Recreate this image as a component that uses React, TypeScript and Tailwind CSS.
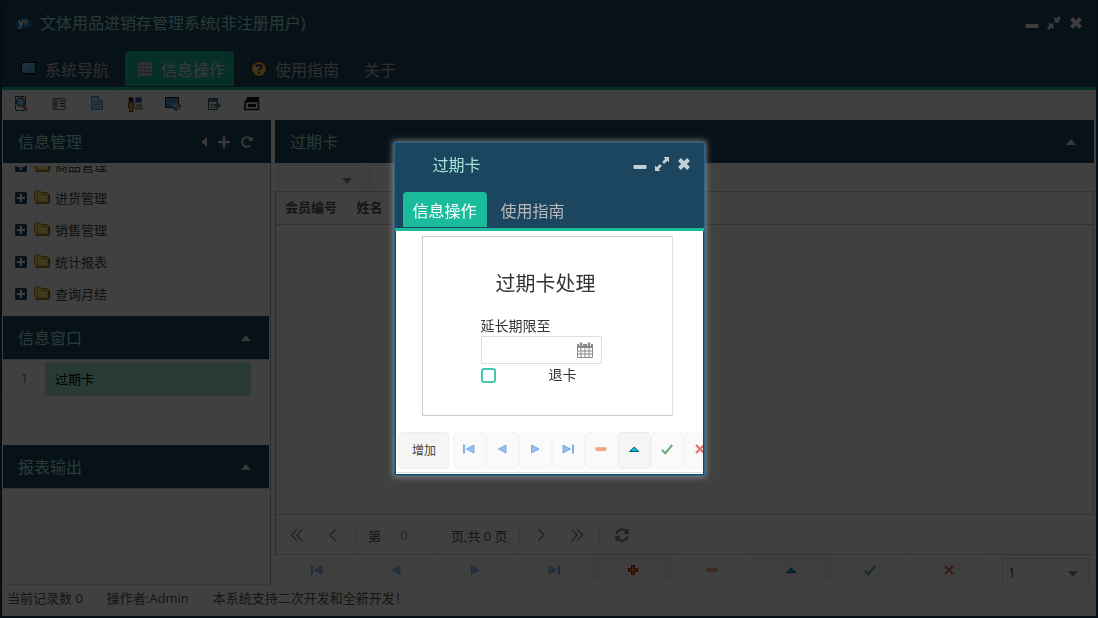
import React, { useState } from "react";
import { FaPlus, FaRedoAlt, FaSyncAlt } from "react-icons/fa";

type NavName =
  | "first"
  | "prev"
  | "next"
  | "last"
  | "add"
  | "remove"
  | "up"
  | "ok"
  | "cancel";

const navLabels: Record<NavName, string> = {
  first: "首记录",
  prev: "上一条",
  next: "下一条",
  last: "末记录",
  add: "增加",
  remove: "删除",
  up: "编辑",
  ok: "保存",
  cancel: "取消",
};

const gridNav: NavName[] = ["first", "prev", "next", "last", "add", "remove", "up", "ok", "cancel"];
const dialogNav: NavName[] = ["first", "prev", "next", "last", "remove", "up", "ok", "cancel"];
const treeItems = ["商品管理", "进货管理", "销售管理", "统计报表", "查询月结"];

const NavIcon = ({ name }: { name: NavName }) => (
  <svg viewBox="0 0 16 16" className="size-4 shrink-0">
    {name === "first" && (
      <>
        <path d="M3 3.5v9" stroke="#3f88dc" strokeWidth="1.6" />
        <path d="M13 4v8L5.5 8z" fill="#7db2f0" stroke="#3f88dc" strokeWidth="0.8" />
      </>
    )}
    {name === "prev" && (
      <path d="M12 4v8L4.5 8z" fill="#7db2f0" stroke="#3f88dc" strokeWidth="0.8" />
    )}
    {name === "next" && (
      <path d="M4.5 4v8L12 8z" fill="#7db2f0" stroke="#3f88dc" strokeWidth="0.8" />
    )}
    {name === "last" && (
      <>
        <path d="M13 3.5v9" stroke="#3f88dc" strokeWidth="1.6" />
        <path d="M3 4v8l7.5-4z" fill="#7db2f0" stroke="#3f88dc" strokeWidth="0.8" />
      </>
    )}
    {name === "add" && (
      <path
        d="M6.5 3.5h3v3h3v3h-3v3h-3v-3h-3v-3h3z"
        fill="#f0793a"
        stroke="#a51d00"
        strokeWidth="1"
      />
    )}
    {name === "remove" && (
      <path d="M3 6.8h10v2.600H3z" fill="#ff9868" stroke="#e8643a" strokeWidth="0.7" />
    )}
    {name === "up" && (
      <path d="M3.5 10.5h9.5L8.2 6z" fill="#12b5d8" stroke="#04637c" strokeWidth="1" />
    )}
    {name === "ok" && (
      <path d="M2.8 8.8l3.400 3.400L13.200 4" fill="none" stroke="#48955a" strokeWidth="2" />
    )}
    {name === "cancel" && (
      <path d="M4 4l8 8M12 4l-8 8" fill="none" stroke="#e0483f" strokeWidth="2" />
    )}
  </svg>
);

const NavButton = ({ name, className }: { name: NavName; className: string }) => {
  const enabled = name === "add" || name === "up";
  return (
    <button
      type="button"
      aria-label={navLabels[name]}
      className={`flex items-center justify-center rounded border ${
        enabled ? "border-[#ececec] bg-[#f5f5f5]" : "border-[#f5f5f5] bg-[#fafafa]"
      } ${className}`}
    >
      <span className={enabled ? "" : "opacity-80"}>
        <NavIcon name={name} />
      </span>
    </button>
  );
};

const WindowTools = ({ restore }: { restore?: boolean }) => (
  <div className="flex items-center gap-2">
    <button type="button" aria-label="最小化">
      <svg viewBox="0 0 14 14" className="size-3.5" fill="currentColor">
        <rect x="0.5" y="8" width="13" height="4" rx="1" />
      </svg>
    </button>
    <button type="button" aria-label={restore ? "还原" : "最大化"}>
      <svg viewBox="0 0 14 14" className="size-3.5" fill="currentColor">
        {restore ? (
          <path d="M7.500 0.800v5.700h5.700L11.400 4.700 14 2.100 11.900 0l-2.600 2.600zM6.500 13.200V7.500H0.800L2.600 9.300 0 11.900 2.100 14l2.600-2.600z" />
        ) : (
          <path d="M8.500 0H14v5.500l-1.700-1.700-3.200 3.200-2-2 3.200-3.200zM5.500 14H0V8.500l1.700 1.700 3.200-3.200 2 2-3.200 3.200z" />
        )}
      </svg>
    </button>
    <button type="button" aria-label="关闭">
      <svg viewBox="0 0 14 14" className="size-3.5">
        <path d="M2.500 2.500l9 9M11.500 2.500l-9 9" stroke="currentColor" strokeWidth="4" />
      </svg>
    </button>
  </div>
);

const ScreenIcon = () => (
  <svg viewBox="0 0 16 16" className="size-4">
    <rect x="0.5" y="1.5" width="14" height="11" fill="#5ba6da" stroke="#0a0a0a" />
    <path d="M1 2h13L1 12z" fill="#8fcbee" opacity="0.6" />
  </svg>
);

const GridIcon = () => (
  <svg viewBox="0 0 16 16" className="size-4">
    <rect x="1" y="1" width="14" height="14" rx="2" fill="#cccccc" />
    <path
      d="M1 4.500h14M1 8h14M1 11.500h14M4.500 1v14M8 1v14M11.500 1v14"
      stroke="#6f7f7a"
      strokeWidth="0.7"
    />
  </svg>
);

const HelpIcon = () => (
  <svg viewBox="0 0 16 16" className="size-4">
    <path
      d="M5 0.5h6L15.500 5v5.500L11 15.500H5L0.500 10.500V5z"
      fill="#f3a727"
      stroke="#2b1600"
      strokeWidth="1"
    />
    <circle cx="8" cy="8" r="5.500" fill="#ffd878" />
    <path
      d="M5.500 6.300c0-3.200 5.200-3 5 0 0 1.700-2.500 1.700-2.500 3.300M8 11v1.800"
      fill="none"
      stroke="#13335a"
      strokeWidth="2"
    />
  </svg>
);

const toolbarIcons = [
  {
    label: "查询",
    icon: (
      <>
        <path d="M2.500 0.500h10v14h-10z" fill="#f6f6f6" stroke="#333" strokeDasharray="4 1" />
        <circle cx="7.500" cy="6" r="4" fill="#7fd2f7" stroke="#23556f" strokeWidth="1.3" />
        <path d="M10 9.500l4 4.500" stroke="#d0602d" strokeWidth="3" />
      </>
    ),
  },
  {
    label: "列表",
    icon: (
      <>
        <path d="M2 2.500h12v11H2z" fill="#f8f8f8" stroke="#666" />
        <path d="M3 3.500h3v9H3z" fill="#5e91b4" />
        <path d="M7.500 5h1M7.500 7.500h1M7.500 10h1M9.500 5H13M9.500 7.500H13M9.500 10H13" stroke="#222" />
      </>
    ),
  },
  {
    label: "文档",
    icon: (
      <>
        <path d="M2.500 0.500h7l4 4v9h-11z" fill="#a8dcff" stroke="#4e88b5" />
        <path d="M9.500 0.500v4h4" fill="#fff" stroke="#4e88b5" />
        <path d="M4.500 6h7M4.500 8.500h7M4.500 11h7" stroke="#5793c0" />
      </>
    ),
  },
  {
    label: "用户",
    icon: (
      <>
        <path d="M8 1h7v6H8z" fill="#3548c8" stroke="#ddd" />
        <path d="M9 9.500h6M8 12.500h8" stroke="#777" strokeWidth="2" />
        <circle cx="4" cy="3.500" r="2.500" fill="#222" />
        <path d="M1.500 6.500h5.500v5H6v4H2.500v-4h-1z" fill="#e0a33e" stroke="#3b2400" strokeWidth="0.8" />
      </>
    ),
  },
  {
    label: "屏幕",
    icon: (
      <>
        <path d="M0.500 1.500h13v10h-13z" fill="#4d95c9" stroke="#111" />
        <circle cx="12" cy="11" r="4" fill="#e2c33c" />
        <path d="M12 7a4 4 0 0 1 4 4h-4z" fill="#cf4b94" />
        <path d="M8 11a4 4 0 0 1 4-4v4z" fill="#7fd0c8" />
        <path d="M8 11a4 4 0 0 0 4 4v-4z" fill="#3f83d8" />
      </>
    ),
  },
  {
    label: "导出",
    icon: (
      <>
        <path d="M2.500 2.500h9v11h-9z" fill="#fafafa" stroke="#444" />
        <path d="M3 3h8v3H3z" fill="#4284ad" />
        <path d="M4 8.500h6M4 11h6" stroke="#777" />
        <path d="M11.500 6.500v6M8.500 9.500h6" stroke="#2f8b39" strokeWidth="2" />
      </>
    ),
  },
  {
    label: "打印",
    icon: (
      <>
        <path d="M3 1h12.500l-1 4H2z" fill="#111" />
        <path d="M1.500 5.500h13v8H0.500z" fill="#f2f2f2" stroke="#111" strokeWidth="1.6" />
        <path d="M4 8h8v3H4z" fill="#111" />
      </>
    ),
  },
];

const FolderIcon = () => (
  <svg viewBox="0 0 16 14" className="mb-1 h-3.5 w-4">
    <path d="M2 13.2h12.500l1-1.700V5" fill="none" stroke="#4f3603" strokeWidth="1.200" />
    <path
      d="M0.700 10.500V2.500l1.200-1.800h4l1.500 1.800h6l1 1.200v7.300l-1.200 1.200H2z"
      fill="#f6d766"
      stroke="#b07a16"
      strokeWidth="1"
    />
    <path d="M3.500 4.800h10.500v7H3.500z" fill="#ffe68c" stroke="#c9962a" strokeWidth="0.900" />
  </svg>
);

const ExpandIcon = () => (
  <svg viewBox="0 0 12 12" className="mb-0.5 size-3">
    <rect width="12" height="12" rx="2" fill="#1c4560" />
    <path d="M6 2v8M2 6h8" stroke="#fff" strokeWidth="2" />
  </svg>
);

const Caret = ({ className }: { className: string }) => (
  <svg viewBox="0 0 10 6" className={`h-1.5 w-2.5 ${className}`} fill="currentColor">
    <path d="M0 6h10L5 0z" />
  </svg>
);

const PanelHeader = ({ title, children }: { title: string; children?: React.ReactNode }) => (
  <header className="flex h-[43px] shrink-0 items-center justify-between bg-[#1c4560] pr-[18px] pl-[15px] text-[#a3e4d7]">
    <h2 className="text-base">{title}</h2>
    <div className="flex items-center gap-2.5 text-[#dddddd]">
      {children || (
        <button type="button" aria-label="折叠">
          <Caret className="" />
        </button>
      )}
    </div>
  </header>
);

const Pager = () => (
  <div className="flex h-[41px] shrink-0 items-center border-y border-[#c8c8c8] pl-[14px] text-[13px] text-[#555555]">
    <button type="button" aria-label="第一页" className="text-[#999999]">
      <svg viewBox="0 0 14 14" className="size-3.5" fill="none" stroke="currentColor" strokeWidth="1.6">
        <path d="M7 1L1.500 7 7 13M12.500 1L7 7l5.500 6" />
      </svg>
    </button>
    <button type="button" aria-label="上一页" className="ml-[22px] text-[#999999]">
      <svg viewBox="0 0 14 14" className="size-3.5" fill="none" stroke="currentColor" strokeWidth="1.6">
        <path d="M10 1L4 7l6 6" />
      </svg>
    </button>
    <span className="ml-[15px] h-4 border-l border-[#dddddd]" />
    <label htmlFor="page" className="ml-3 pt-1">
      第
    </label>
    <input
      id="page"
      defaultValue="0"
      className="ml-3 h-7 w-[50px] border border-[#eeeeee] px-1.5 text-[#999999]"
    />
    <span className="ml-2 pt-1">页,共 0 页</span>
    <span className="ml-[11px] h-4 border-l border-[#dddddd]" />
    <button type="button" aria-label="下一页" className="ml-[14px] text-[#999999]">
      <svg viewBox="0 0 14 14" className="size-3.5" fill="none" stroke="currentColor" strokeWidth="1.6">
        <path d="M4 1l6 6-6 6" />
      </svg>
    </button>
    <button type="button" aria-label="最后一页" className="ml-[22px] text-[#999999]">
      <svg viewBox="0 0 14 14" className="size-3.5" fill="none" stroke="currentColor" strokeWidth="1.6">
        <path d="M1.500 1L7 7l-5.500 6M7 1l5.500 6L7 13" />
      </svg>
    </button>
    <span className="ml-[15px] h-4 border-l border-[#dddddd]" />
    <button type="button" aria-label="刷新" className="ml-[15px] text-[#888888]">
      <FaSyncAlt className="size-3.5" />
    </button>
  </div>
);

const ExtendDialog = () => {
  const [date, setDate] = useState("");
  const [returned, setReturned] = useState(false);

  return (
    <div
      role="dialog"
      aria-label="过期卡"
      className="flex w-[311px] flex-col border border-[#2a658c] bg-[#1c4560] pb-px shadow-[0_0_6px_1px_#888888]"
    >
      <header className="flex h-[49px] items-start justify-between pt-2.5 pr-[13px] pl-[38px] text-[#a3e4d7]">
        <h2 className="text-base">过期卡</h2>
        <div className="pt-1 text-[#c3ced5]">
          <WindowTools />
        </div>
      </header>
      <nav className="flex gap-1.5 border-b-[3px] border-[#1abc9c] px-2 pb-px">
        <button type="button" className="h-[35px] rounded-t bg-[#1abc9c] px-2.5 pt-0.5 text-base text-white">
          信息操作
        </button>
        <button type="button" className="h-[35px] px-2 pt-0.5 text-base text-[#b9b9bb]">
          使用指南
        </button>
      </nav>
      <div className="mx-px bg-white pt-[5px] pb-px">
        <form className="mx-[26px] flex h-[180px] w-[251px] flex-col border border-[#cccccc] border-r-[#e4e4e4] pt-[33px] pl-[58px] text-sm text-[#333333]">
          <h3 className="pl-[15px] text-xl">过期卡处理</h3>
          <label htmlFor="until" className="mt-[18px] leading-5">
            延长期限至
          </label>
          <div className="flex h-7 w-[121px] items-center border border-[#dddddd] pr-2">
            <input
              id="until"
              value={date}
              onChange={(e) => setDate(e.target.value)}
              className="w-full min-w-0 flex-1 px-1 outline-none"
            />
            <button type="button" aria-label="选择日期" className="text-[#8a8a8a]">
              <svg viewBox="0 0 16 16" className="size-4" fill="none" stroke="currentColor">
                <path d="M0.500 2.500h15v13h-15zM0.500 9h15M0.500 12h15M4 6v9.500M8 6v9.500M12 6v9.500" />
                <path d="M0.500 2.500h15v3h-15z" fill="currentColor" />
                <path d="M4 0v4M12 0v4" stroke="#ffffff" strokeWidth="4" />
                <path d="M4 0.500v3.500M12 0.500v3.500" strokeWidth="2.500" />
              </svg>
            </button>
          </div>
          <div className="flex items-center pt-px">
            <input
              id="returned"
              type="checkbox"
              checked={returned}
              onChange={(e) => setReturned(e.target.checked)}
              className="size-[15px] appearance-none rounded-[3px] border-2 border-[#3fc9ae] checked:bg-[#1abc9c]"
            />
            <label htmlFor="returned" className="pl-[53px]">
              退卡
            </label>
          </div>
        </form>
        <div className="mt-4 flex h-[37px] overflow-hidden pl-0.5">
          <button
            type="button"
            className="mr-1 w-[51px] shrink-0 rounded border border-[#eeeeee] bg-[#f5f5f5] pl-0.5 text-xs text-[#444444]"
          >
            增加
          </button>
          {dialogNav.map((name) => (
            <NavButton key={name} name={name} className="w-[33px] shrink-0 pb-[3px]" />
          ))}
        </div>
        <div className="mt-[3px] border-b border-[#d5e0e8]" />
      </div>
    </div>
  );
};

const App = () => {
  return (
    <div className="flex h-screen flex-col border-2 border-t border-[#123a5c] bg-[#1c4560] font-['Open_Sans','Noto_Sans_CJK_SC',sans-serif]">
      <header className="flex h-[50px] shrink-0 items-center justify-between pr-[13px] pb-1.5 pl-[14px] text-[#a3e4d7]">
        <div className="flex items-center gap-2">
          <svg viewBox="0 0 16 16" className="size-4">
            <path d="M3.500 13.500a3.500 3.500 0 0 1-.5-7 5 5 0 0 1 9.500-1 3.800 3.800 0 0 1 .5 7.500z" fill="#1d6fb4" />
            <text x="2" y="11" fontSize="10" fontWeight="700" fill="#ffffff">
              y
            </text>
            <path d="M9 10V5.500h3.500M9 7.800h3" fill="none" stroke="#e8d5dc" strokeWidth="1.300" />
          </svg>
          <h1 className="text-base">文体用品进销存管理系统(非注册用户)</h1>
        </div>
        <div className="text-[#eeeeee]">
          <WindowTools restore />
        </div>
      </header>

      <nav className="flex shrink-0 gap-[7px] border-b-[3px] border-[#1abc9c] px-[7px] pb-px text-base text-[#c4b9b9]">
        <button type="button" className="flex h-[35px] items-center gap-2 pr-[9px] pl-3">
          <ScreenIcon />
          <span className="pt-0.5">系统导航</span>
        </button>
        <button
          type="button"
          className="flex h-[35px] items-center gap-2 rounded-t bg-[#1abc9c] pr-[9px] pl-3 text-[#e6e6e6]"
        >
          <GridIcon />
          <span className="pt-0.5">信息操作</span>
        </button>
        <button type="button" className="flex h-[35px] items-center gap-2 pr-[9px] pl-2.5">
          <HelpIcon />
          <span className="pt-0.5">使用指南</span>
        </button>
        <button type="button" className="h-[35px] px-[9px] pt-0.5">
          关于
        </button>
      </nav>

      <div className="flex h-[30px] shrink-0 items-center gap-[7px] bg-white pb-0.5 pl-[3px]">
        {toolbarIcons.map((item, i) => (
          <button
            key={item.label}
            type="button"
            aria-label={item.label}
            className={`flex h-6 w-[31px] items-center justify-center rounded border border-[#f2f2f2] bg-[#fdfdfd] ${
              i === 5 ? "ml-[3px]" : ""
            }`}
          >
            <svg viewBox="0 0 16 16" className="size-4">
              {item.icon}
            </svg>
          </button>
        ))}
      </div>

      <main className="flex min-h-0 flex-1 gap-1 bg-white pr-0.5 pl-px">
        <aside className="flex w-[268px] shrink-0 flex-col border-b border-[#dddddd]">
          <PanelHeader title="信息管理">
            <button type="button" aria-label="收起">
              <svg viewBox="0 0 6 10" className="h-2.5 w-1.5" fill="currentColor">
                <path d="M6 0v10L0 5z" />
              </svg>
            </button>
            <button type="button" aria-label="添加">
              <FaPlus className="size-3.5" />
            </button>
            <button type="button" aria-label="刷新">
              <FaRedoAlt className="size-3" />
            </button>
          </PanelHeader>
          <div className="flex min-h-0 flex-1 flex-col border-r border-[#aebbc5] pr-px">
            <div className="h-[153px] shrink-0 pt-[3px]">
              <ul className="flex h-[150px] flex-col justify-end overflow-hidden pb-[5px]">
                {treeItems.map((item) => (
                  <li
                    key={item}
                    className="flex h-8 shrink-0 items-center pl-3 text-[13px] text-[#444444]"
                  >
                    <button type="button" aria-label="展开">
                      <ExpandIcon />
                    </button>
                    <span className="mr-[5px] ml-[7px]">
                      <FolderIcon />
                    </span>
                    <span>{item}</span>
                  </li>
                ))}
              </ul>
            </div>
            <PanelHeader title="信息窗口" />
            <div className="h-[86px] shrink-0 border-t border-[#c5d0d8] pt-0.5 pr-[18px] pl-[3px]">
              <table className="w-full text-[13px]">
                <tbody>
                  <tr className="h-[33px] border-y border-[#dceee9]">
                    <td className="w-[39px] pr-0.5 text-center text-[#777777]">1</td>
                    <td className="bg-[#a3e4d7] pt-0.5 pl-2.5 text-black">过期卡</td>
                  </tr>
                </tbody>
              </table>
            </div>
            <PanelHeader title="报表输出" />
            <div className="border-t border-[#c5d0d8]" />
          </div>
        </aside>

        <section className="flex min-w-0 flex-1 flex-col">
          <PanelHeader title="过期卡" />
          <div className="flex h-7 gap-1.5 pt-0.5 pl-[3px]">
            {["查询字段", "查询条件"].map((label) => (
              <div key={label} className="relative w-[85px] border-x border-t border-[#e8e8e8]">
                <select aria-label={label} className="h-full w-full appearance-none px-2 text-[13px]" />
                <Caret className="pointer-events-none absolute top-3 right-2.5 rotate-180 text-[#888888]" />
              </div>
            ))}
          </div>
          <div className="min-h-0 flex-1 border-x border-t border-[#aaaaaa] border-t-[#c8c8c8] border-r-[#c8c8c8]">
            <table className="w-full text-[13px] text-[#555555]">
              <thead>
                <tr className="h-8 border-b border-[#c8c8c8] text-left">
                  <th className="w-[71px] border-r border-[#eeeeee] pl-[9px] whitespace-nowrap">会员编号</th>
                  <th className="pl-[9px]">姓名</th>
                </tr>
              </thead>
            </table>
          </div>
          <div className="border-l border-[#aaaaaa]">
            <Pager />
          </div>
          <div className="flex h-[30px] shrink-0 items-start pt-[3px] pr-[5px] pl-[3px]">
            {gridNav.map((name) => (
              <NavButton key={name} name={name} className="h-[23px] flex-1" />
            ))}
            <div className="relative ml-[14px] h-[26px] w-[87px] border-x border-t border-[#dddddd]">
              <select
                aria-label="页号"
                className="h-full w-full appearance-none px-[5px] pt-0.5 text-[13px] text-[#333333]"
              >
                <option>1</option>
              </select>
              <Caret className="pointer-events-none absolute top-3 right-2.5 rotate-180 text-[#888888]" />
            </div>
          </div>
        </section>
      </main>

      <footer className="flex h-[31px] shrink-0 items-center gap-6 bg-white pb-1 pl-[5px] text-[13px] text-[#555555]">
        <span>当前记录数 0</span>
        <span>操作者:Admin</span>
        <span>本系统支持二次开发和全新开发！</span>
      </footer>

      <div className="fixed inset-0 flex items-center justify-center bg-black/75">
        <ExtendDialog />
      </div>
    </div>
  );
};

export default App;
